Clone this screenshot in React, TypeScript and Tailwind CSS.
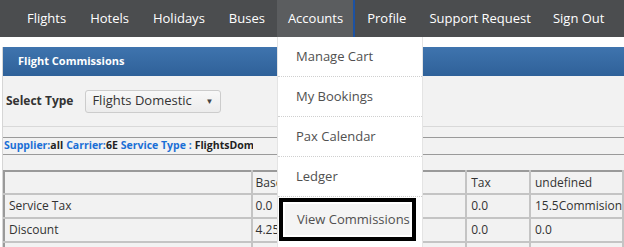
import React from 'react'

const navItems = [
    {label: 'Flights', cls: 'px-[12px]'},
    {label: 'Hotels', cls: 'px-[12px]'},
    {label: 'Holidays', cls: 'px-[12px]'},
    {label: 'Buses', cls: 'px-[12px]'},
    {label: 'Accounts', cls: 'pl-[11px] pr-[10px] bg-[#5b5d5f] border-r-2 border-[#1c52a3]'},
    {label: 'Profile', cls: 'px-[12px]'},
    {label: 'Support Request', cls: 'px-[11px]'},
    {label: 'Sign Out', cls: 'px-[11px]'},
]
const menuItems = ['Manage Cart', 'My Bookings', 'Pax Calendar', 'Ledger']

const rows = [
    {label: 'Service Tax', base: '0.0', tax: '0.0', other: '15.5Commision'},
    {label: 'Discount', base: '4.25', tax: '0.0', other: '0.0'},
    {label: '', base: '', tax: '', other: ''},
]

const App = () => {
    return (
        <div className="relative w-[624px] h-[247px] overflow-hidden bg-white font-['Open_Sans',sans-serif]">
            <nav className="flex h-[37px] bg-[#4b4d4f] pl-[15px] text-[13px] text-white">
                {navItems.map((item) => (
                    <div key={item.label} className={'flex items-center ' + item.cls}>
                        {item.label}
                    </div>
                ))}
            </nav>

            <div className="pt-[10px] pl-[2px]">
                <div className="border-l border-[#d6d6d6] bg-[#f2f2f2]">
                    <div className="flex items-center h-[29px] pl-[15px] bg-gradient-to-b from-[#3f74ae] to-[#2f6199] text-[11px] font-bold text-white">
                        Flight Commissions
                    </div>
                    <div className="flex items-center h-[50px] pl-[3px] gap-[12px]">
                        <span className="text-[12px] font-bold text-[#333]">Select Type</span>
                        <div className="flex items-center justify-between w-[136px] h-[23px] pl-[6px] pr-[7px] rounded-[3px] border border-[#ccc] bg-gradient-to-b from-[#f8f8f8] to-[#ececec] text-[13px] text-[#333]">
                            <span>Flights Domestic</span>
                            <span className="text-[8px] text-[#444]">▼</span>
                        </div>
                    </div>
                    <div className="border-t border-[#d9d9d9] pt-[10px]">
                        <div className="flex items-center h-[18px] pl-[1px] border-y border-[#9a9a9a] text-[10.5px] font-bold">
                            <div className="w-[249px] overflow-hidden whitespace-nowrap">
                                <span className="text-[#1a6fd6]">Supplier:</span>
                                <span className="text-[#222]">all</span>
                                <span className="text-[#1a6fd6] ml-[3px]">Carrier:</span>
                                <span className="text-[#222]">6E</span>
                                <span className="text-[#1a6fd6] ml-[3px]">Service Type :</span>
                                <span className="text-[#222] ml-[3px]">FlightsDomestic</span>
                            </div>
                        </div>
                    </div>
                    <table className="mt-[15px] w-[621px] border-collapse text-[12px] text-[#333]">
                        <tbody>
                            <tr className="h-[23px]">
                                <td className="w-[249px] border-2 border-[#c4c4c4] border-l-[#9a9a9a] border-t-[#9a9a9a]"></td>
                                <td className="w-[108px] border-2 border-[#c4c4c4] border-t-[#9a9a9a] pl-[3px]">Base</td>
                                <td className="w-[108px] border-2 border-[#c4c4c4] border-t-[#9a9a9a] pl-[3px]"></td>
                                <td className="w-[64px] border-2 border-[#c4c4c4] border-t-[#9a9a9a] pl-[4px]">Tax</td>
                                <td className="border-2 border-[#c4c4c4] border-t-[#9a9a9a] pl-[4px]">undefined</td>
                            </tr>
                            {rows.map((r, i) => (
                                <tr key={i} className="h-[24px]">
                                    <td className="border-2 border-[#c4c4c4] border-l-[#9a9a9a] pl-[4px]">{r.label}</td>
                                    <td className="border-2 border-[#c4c4c4] pl-[3px]">{r.base}</td>
                                    <td className="border-2 border-[#c4c4c4] pl-[3px]"></td>
                                    <td className="border-2 border-[#c4c4c4] pl-[4px]">{r.tax}</td>
                                    <td className="border-2 border-[#c4c4c4] pl-[4px]">{r.other}</td>
                                </tr>
                            ))}
                        </tbody>
                    </table>
                </div>
            </div>

            <div className="absolute left-[277px] top-[37px] w-[146px] h-[220px] bg-white border-x border-[#e4e4e4] text-[13px] text-[#505050]">
                {menuItems.map((item) => (
                    <div
                        key={item}
                        className="flex items-center h-[40px] pl-[18px] border-b border-dotted border-[#cfcfcf]"
                    >
                        {item}
                    </div>
                ))}
                <div className="ml-[1px] mt-[1px] w-[137px] h-[43px] border-[4px] border-black p-[2px]">
                    <div className="flex items-center h-full pl-[12px] bg-[#f4f4f4]">View Commissions</div>
                </div>
            </div>
        </div>
    )
}

export default App
